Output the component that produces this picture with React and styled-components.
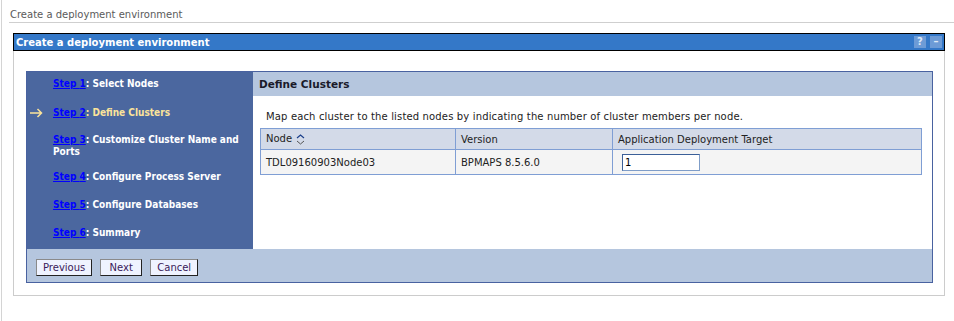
import React, { useState } from 'react'
import styled, { createGlobalStyle } from 'styled-components'

const Global = createGlobalStyle`
  body {
    margin: 0;
    background: #ffffff;
    font-family: "DejaVu Sans", Verdana, sans-serif;
    font-size: 10px;
    color: #000;
  }
`

const Page = styled.div`
  min-height: 321px;
  margin-left: 1px;
  border-left: 1px solid #d4d4d4;
  padding-top: 9px;
  box-sizing: border-box;
`

const Crumb = styled.div`
  margin-left: 7px;
  padding: 0 0 1px 1px;
  color: #5a5a5a;
  font-size: 10px;
  line-height: 12px;
  border-bottom: 1px solid #cfcfcf;
`

const Portlet = styled.div`
  margin: 10px 9px 0 11px;
  border: 1px solid #cccccc;
  border-top: none;
`

const TitleBar = styled.div`
  display: flex;
  align-items: center;
  justify-content: space-between;
  height: 16px;
  margin: 0 -1px;
  border: 1px solid #000;
  background: #3478c8;
  color: #fff;
  font-weight: bold;
  font-size: 10px;
  padding-left: 2px;
`

const Tools = styled.div`
  display: flex;
  gap: 4px;
  padding-right: 2px;
`

const Tool = styled.span`
  width: 12px;
  height: 12px;
  background: #6d9bd6;
  color: #dfe9f7;
  font-size: 10px;
  line-height: 12px;
  text-align: center;
  font-weight: bold;
`

const Wizard = styled.div`
  margin: 20px 11px 12px 12px;
  border: 1px solid #4962a0;
  display: flex;
  flex-direction: column;
`

const Body = styled.div`
  display: flex;
  height: 177px;
`

const Nav = styled.div`
  width: 226px;
  background: #4b679f;
  box-sizing: border-box;
  display: flex;
  flex-direction: column;
  font-family: "DejaVu Sans Condensed", "DejaVu Sans", sans-serif;
`

const NavItem = styled.div`
  position: relative;
  margin-top: ${p => p.$space}px;
  padding: 0 4px 0 26px;
  line-height: 12px;
  font-weight: bold;
  color: ${p => (p.$current ? '#fbe39a' : '#ffffff')};
`

const StepLink = styled.a`
  color: #0000ff;
  text-decoration: underline;
  cursor: pointer;
`

const Arrow = styled.svg`
  position: absolute;
  left: 2px;
  top: 1px;
`

const Content = styled.div`
  flex: 1;
  background: #ffffff;
`

const ContentHead = styled.div`
  height: 24px;
  background: #b5c6de;
  padding-left: 6px;
  display: flex;
  align-items: center;
  font-weight: bold;
  font-size: 10.5px;
  color: #1a1a2a;
`

const Desc = styled.div`
  padding: 15px 0 0 13px;
  line-height: 12px;
  letter-spacing: 0.15px;
  color: #222;
`

const Table = styled.table`
  margin: 5px 10px 0 7px;
  width: calc(100% - 17px);
  border-collapse: collapse;
  border: 1px solid #7f9ed4;
`

const Th = styled.th`
  text-align: left;
  font-weight: normal;
  background: #d3dae8;
  border: 1px solid #7f9ed4;
  height: 20px;
  padding: 0 5px;
  width: ${p => p.$w || 'auto'};
  color: #222;
`

const Td = styled.td`
  background: #f4f4f4;
  border: 1px solid #7f9ed4;
  height: 24px;
  padding: 0 5px;
  color: #222;
`

const SortIcon = styled.svg`
  vertical-align: middle;
  margin-left: 4px;
`

const Field = styled.input`
  width: 72px;
  height: 13px;
  margin-left: 4px;
  padding: 1px 2px;
  border: 1px solid #7f9dc8;
  border-top-color: #3b5f98;
  border-left-color: #3b5f98;
  font: inherit;
  font-size: 10px;
  outline: none;
`

const ButtonBar = styled.div`
  background: #b5c6de;
  height: 33px;
  display: flex;
  align-items: flex-start;
  gap: 8px;
  padding: 10px 0 0 9px;
  box-sizing: border-box;
`

const Button = styled.button`
  font: inherit;
  font-size: 10px;
  height: 17px;
  min-width: ${p => p.$min || 'auto'};
  padding: 0 6px;
  background: #eff3ff;
  color: #3a1a5a;
  border: 1px solid;
  border-color: #8a8a8a #222 #222 #8a8a8a;
  cursor: pointer;
`

// space above each step, taken from the screenshot
const steps = [
  { n: 1, label: 'Select Nodes', space: 6 },
  { n: 2, label: 'Define Clusters', space: 17 },
  { n: 3, label: 'Customize Cluster Name and Ports', space: 15 },
  { n: 4, label: 'Configure Process Server', space: 13 },
  { n: 5, label: 'Configure Databases', space: 16 },
  { n: 6, label: 'Summary', space: 16 },
]

export default function App() {
  const [target, setTarget] = useState('1')
  const current = 2

  return (
    <>
      <Global />
      <Page>
        <Crumb>Create a deployment environment</Crumb>
        <Portlet>
          <TitleBar>
            <span>Create a deployment environment</span>
            <Tools>
              <Tool>?</Tool>
              <Tool>–</Tool>
            </Tools>
          </TitleBar>
          <Wizard>
            <Body>
              <Nav>
                {steps.map(s => (
                  <NavItem key={s.n} $current={s.n === current} $space={s.space}>
                    {s.n === current && (
                      <Arrow width="14" height="10" viewBox="0 0 14 10">
                        <path d="M1 5H12.5M8.5 1L12.5 5L8.5 9" stroke="#fbe39a" strokeWidth="1.5" fill="none" />
                      </Arrow>
                    )}
                    <StepLink>Step {s.n}</StepLink>: {s.label}
                  </NavItem>
                ))}
              </Nav>
              <Content>
                <ContentHead>Define Clusters</ContentHead>
                <Desc>Map each cluster to the listed nodes by indicating the number of cluster members per node.</Desc>
                <Table>
                  <thead>
                    <tr>
                      <Th $w="184px">
                        Node
                        <SortIcon width="9" height="11" viewBox="0 0 9 11">
                          <path d="M1 4L4.5 1L8 4" stroke="#1b3f8a" strokeWidth="1.2" fill="none" />
                          <path d="M1 7L4.5 10L8 7" stroke="#555" strokeWidth="1" fill="none" />
                        </SortIcon>
                      </Th>
                      <Th $w="146px">Version</Th>
                      <Th>Application Deployment Target</Th>
                    </tr>
                  </thead>
                  <tbody>
                    <tr>
                      <Td>TDL09160903Node03</Td>
                      <Td>BPMAPS 8.5.6.0</Td>
                      <Td>
                        <Field value={target} onChange={e => setTarget(e.target.value)} />
                      </Td>
                    </tr>
                  </tbody>
                </Table>
              </Content>
            </Body>
            <ButtonBar>
              <Button>Previous</Button>
              <Button $min="42px">Next</Button>
              <Button>Cancel</Button>
            </ButtonBar>
          </Wizard>
        </Portlet>
      </Page>
    </>
  )
}
